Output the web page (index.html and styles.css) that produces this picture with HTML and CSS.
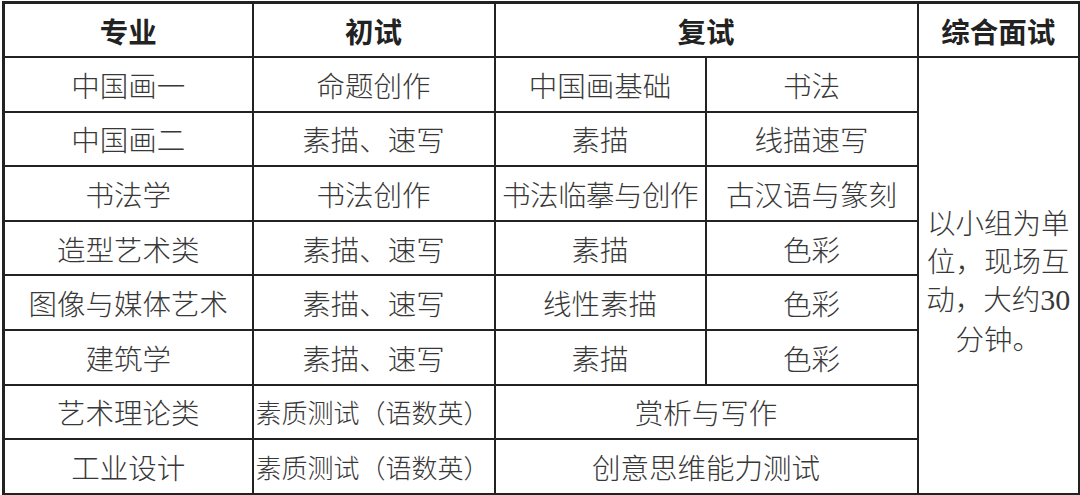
FILE: index.html
```html
<!DOCTYPE html>
<html lang="zh-CN">
<head>
<meta charset="utf-8">
<title>考试科目</title>
<link rel="stylesheet" href="styles.css">
</head>
<body>
<table class="exam">
  <colgroup>
    <col class="c1"><col class="c2"><col class="c3"><col class="c4"><col class="c5">
  </colgroup>
  <thead>
    <tr class="head">
      <th>专业</th>
      <th>初试</th>
      <th colspan="2">复试</th>
      <th>综合面试</th>
    </tr>
  </thead>
  <tbody>
    <tr>
      <td>中国画一</td><td>命题创作</td><td>中国画基础</td><td>书法</td>
      <td rowspan="8" class="note">以小组为单<br>位，现场互<br>动，大约<span class="num">30</span><br>分钟。</td>
    </tr>
    <tr><td>中国画二</td><td>素描、速写</td><td>素描</td><td>线描速写</td></tr>
    <tr><td>书法学</td><td>书法创作</td><td class="tight">书法临摹与创作</td><td>古汉语与篆刻</td></tr>
    <tr><td>造型艺术类</td><td>素描、速写</td><td>素描</td><td>色彩</td></tr>
    <tr><td>图像与媒体艺术</td><td>素描、速写</td><td>线性素描</td><td>色彩</td></tr>
    <tr><td>建筑学</td><td>素描、速写</td><td>素描</td><td>色彩</td></tr>
    <tr><td>艺术理论类</td><td class="narrow">素质测试（语数英）</td><td colspan="2">赏析与写作</td></tr>
    <tr><td>工业设计</td><td class="narrow">素质测试（语数英）</td><td colspan="2">创意思维能力测试</td></tr>
  </tbody>
</table>
</body>
</html>
```

FILE: styles.css
```css
html, body {
  margin: 0;
  padding: 0;
  background: #ffffff;
}

body {
  padding: 1px 0 0 2px;
  font-family: "Noto Sans CJK SC", sans-serif;
  color: #333333;
}

.exam {
  border-collapse: collapse;
  table-layout: fixed;
  width: 1076px;
  border: 3px solid #222222;
}

.c1 { width: 249px; }
.c2 { width: 242px; }
.c3 { width: 211px; }
.c4 { width: 212px; }
.c5 { width: 162px; }

.exam th,
.exam td {
  border: 2px solid #222222;
  text-align: center;
  vertical-align: middle;
  padding: 0;
  white-space: nowrap;
  overflow: visible;
}

.exam th {
  height: 52px;
  font-size: 28.5px;
  font-weight: 700;
  color: #222222;
  font-family: "Noto Sans CJK SC", sans-serif;
}

.exam td {
  height: 52.6px;
  font-size: 28.5px;
  font-weight: 300;
  color: #383838;
  font-family: "Noto Sans CJK SC", sans-serif;
}

.exam td.narrow {
  font-size: 26px;
  text-align: left;
  padding-left: 2px;
}

.exam td.tight {
  letter-spacing: -0.5px;
}

.exam td.note {
  line-height: 38px;
  padding-top: 10px;
}

.num {
  font-family: "Liberation Serif", serif;
  font-weight: 400;
  font-size: 30px;
}
```
